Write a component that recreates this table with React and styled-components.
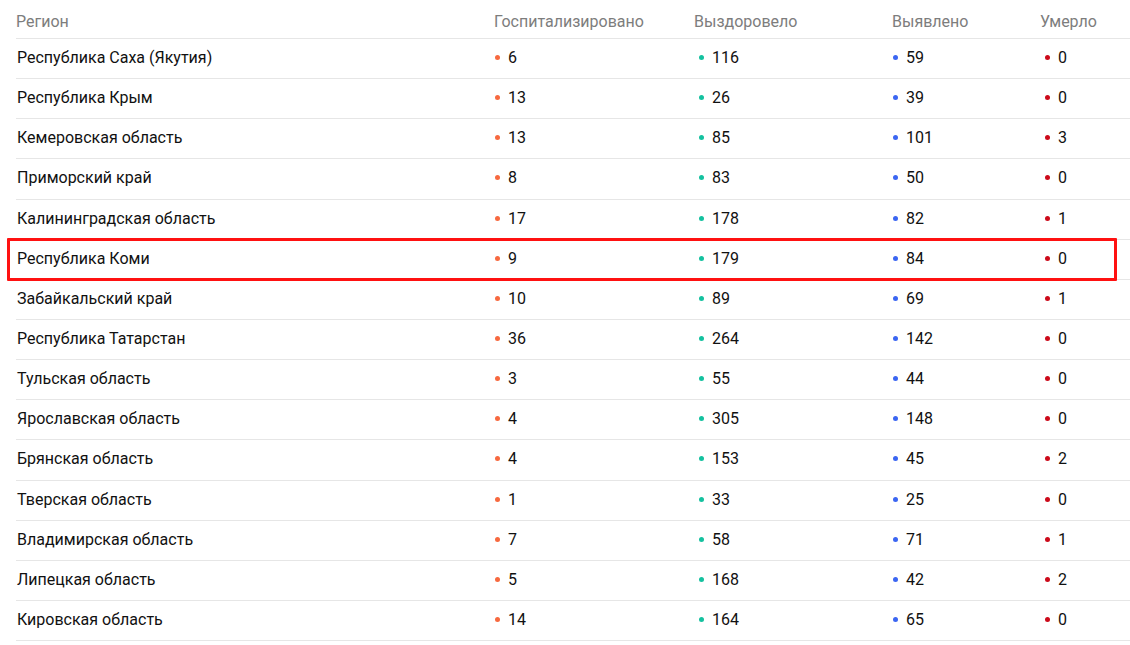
import React from 'react';
import styled, { createGlobalStyle } from 'styled-components';

const rows = [
  ['Республика Саха (Якутия)', 6, 116, 59, 0],
  ['Республика Крым', 13, 26, 39, 0],
  ['Кемеровская область', 13, 85, 101, 3],
  ['Приморский край', 8, 83, 50, 0],
  ['Калининградская область', 17, 178, 82, 1],
  ['Республика Коми', 9, 179, 84, 0],
  ['Забайкальский край', 10, 89, 69, 1],
  ['Республика Татарстан', 36, 264, 142, 0],
  ['Тульская область', 3, 55, 44, 0],
  ['Ярославская область', 4, 305, 148, 0],
  ['Брянская область', 4, 153, 45, 2],
  ['Тверская область', 1, 33, 25, 0],
  ['Владимирская область', 7, 58, 71, 1],
  ['Липецкая область', 5, 168, 42, 2],
  ['Кировская область', 14, 164, 65, 0],
];

const columns = [
  { title: 'Госпитализировано', color: '#f7693f', indent: 1 },
  { title: 'Выздоровело', color: '#14c19f', indent: 5 },
  { title: 'Выявлено', color: '#3b66f2', indent: 1 },
  { title: 'Умерло', color: '#cc0a1a', indent: 5 },
];

const GlobalStyle = createGlobalStyle`
  body {
    margin: 0;
    background: #fff;
    font-family: Roboto, "Liberation Sans", sans-serif;
  }
`;

const Table = styled.div`
  padding-left: 16px;
`;

const Row = styled.div`
  position: relative;
  display: grid;
  grid-template-columns: 478px 200px 198px 148px 1fr;
  align-items: center;
  height: ${p => (p.$head ? '39px' : '40.15px')};
  box-sizing: border-box;
  border-bottom: 1px solid #e6e6e6;
  font-size: 16px;
  color: ${p => (p.$head ? '#7d7d7d' : '#111')};

  ${p => p.$marked && `
    &::after {
      content: '';
      position: absolute;
      left: -9px;
      right: 13px;
      top: -2px;
      bottom: -2px;
      border: 3px solid #ff1111;
      border-radius: 1px;
    }
  `}
`;

const NameCell = styled.div`
  padding-left: 1px;
  padding-bottom: 2px;
`;

const HeadCell = styled.div`
  padding-top: 4px;
`;

const Value = styled.div`
  display: flex;
  align-items: center;
  gap: 8px;
  padding-left: ${p => p.$indent}px;
  padding-bottom: 2px;
`;

const Dot = styled.span`
  width: 5px;
  height: 5px;
  border-radius: 50%;
  background: ${p => p.$color};
  flex-shrink: 0;
`;

export default function App() {
  return (
    <>
      <GlobalStyle />
      <Table>
        <Row $head>
          <HeadCell>Регион</HeadCell>
          {columns.map(c => (
            <HeadCell key={c.title}>{c.title}</HeadCell>
          ))}
        </Row>
        {rows.map(([name, ...vals], i) => (
          <Row key={name} $marked={i === 5}>
            <NameCell>{name}</NameCell>
            {vals.map((v, j) => (
              <Value key={j} $indent={columns[j].indent}>
                <Dot $color={columns[j].color} />
                {v}
              </Value>
            ))}
          </Row>
        ))}
      </Table>
    </>
  );
}
